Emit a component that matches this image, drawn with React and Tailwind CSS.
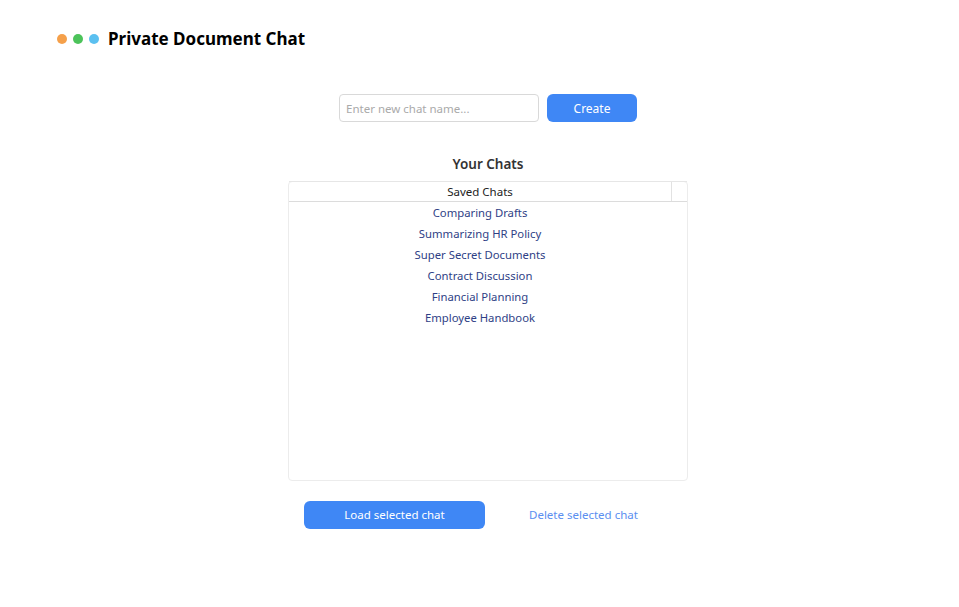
const chats = [
  'Comparing Drafts',
  'Summarizing HR Policy',
  'Super Secret Documents',
  'Contract Discussion',
  'Financial Planning',
  'Employee Handbook',
];

export default function App() {
  return (
    <div className="min-h-[607px] bg-white text-[#222]" style={{ fontFamily: '"Segoe UI", "Noto Sans", sans-serif' }}>
      {/* header */}
      <div className="flex items-center gap-[9px] pl-[57px] pt-[28px]">
        <div className="flex items-center gap-[6px]">
          <span className="w-[10px] h-[10px] rounded-full bg-[#f5a04a]" />
          <span className="w-[10px] h-[10px] rounded-full bg-[#4cc35a]" />
          <span className="w-[10px] h-[10px] rounded-full bg-[#5bc0f0]" />
        </div>
        <h1 className="text-[17px] font-bold text-black leading-[22px]">Private Document Chat</h1>
      </div>

      <div className="pl-[17px]">
        {/* new chat */}
        <div className="flex justify-center gap-2 mt-[44px]">
          <input
            type="text"
            placeholder="Enter new chat name..."
            className="w-[200px] h-[28px] px-[6px] text-[11.5px] border border-[#d9d9d9] rounded-[4px] outline-none placeholder:text-[#aaa]"
          />
          <button className="w-[90px] h-[28px] rounded-[6px] bg-[#3f87f5] text-white text-[12px] pt-[1px]">Create</button>
        </div>

        {/* chats */}
        <div className="flex flex-col items-center mt-[32px]">
          <h2 className="text-[13.5px] font-semibold text-[#333] leading-[20px]">Your Chats</h2>
          <div className="mt-[7px] w-[400px] h-[300px] border border-[#ececec] rounded-[4px] flex flex-col">
            <div className="flex border-b border-[#dcdcdc] h-[20px] shadow-[0_-1px_0_#e6e6e6]">
              <div className="flex-1 text-center text-[11.5px] leading-[19px] text-[#222] border-r border-[#e2e2e2]">Saved Chats</div>
              <div className="w-[15px]" />
            </div>
            <ul className="flex flex-col pr-[16px]">
              {chats.map(c => (
                <li key={c} className="text-center text-[11.3px] leading-[21px] text-[#2f3f86]">{c}</li>
              ))}
            </ul>
          </div>

          <div className="flex items-center mt-[20px] w-[400px] pl-[16px]">
            <button className="w-[181px] h-[28px] rounded-[6px] bg-[#3f87f5] text-white text-[11.5px]">Load selected chat</button>
            <button className="ml-[44px] text-[11.5px] text-[#5b8ff0]">Delete selected chat</button>
          </div>
        </div>
      </div>
    </div>
  );
}
